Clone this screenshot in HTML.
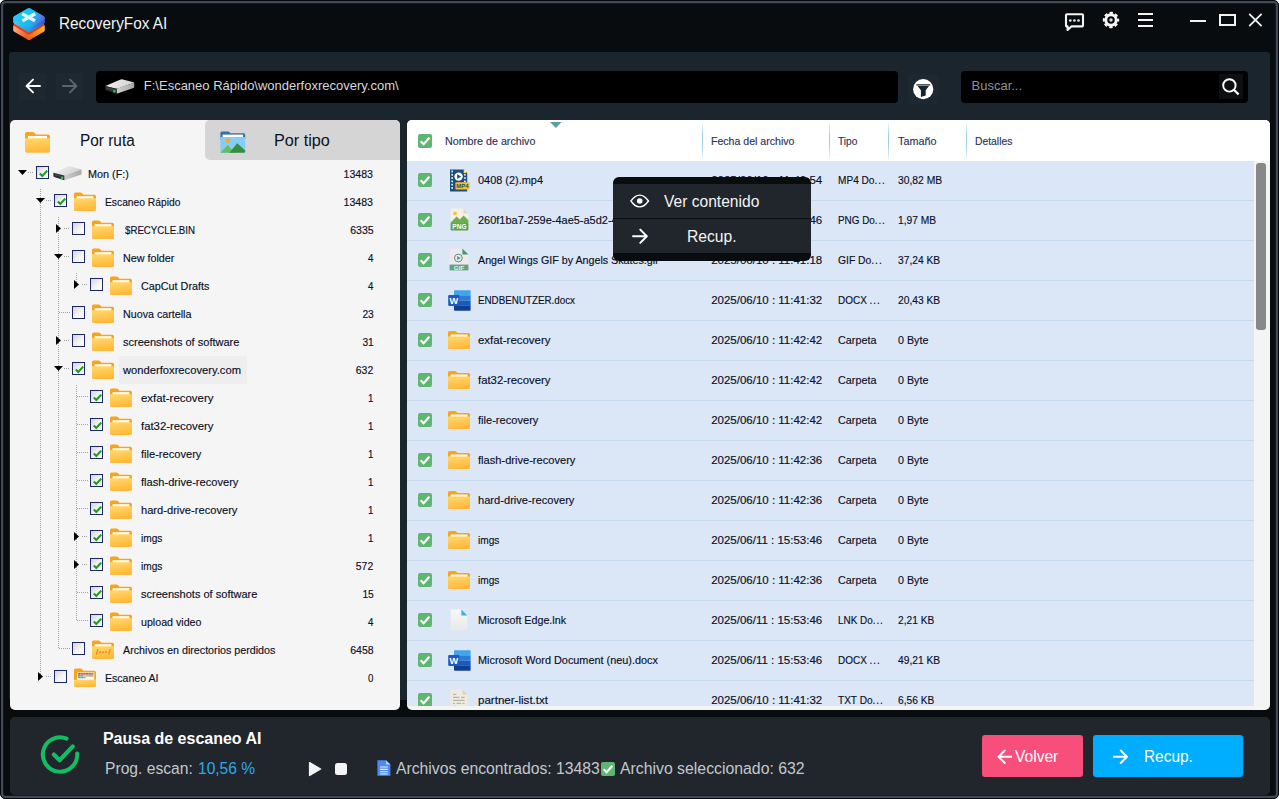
<!DOCTYPE html>
<html><head><meta charset="utf-8"><title>RecoveryFox AI</title>
<style>
html,body{margin:0;padding:0}
body{width:1279px;height:799px;overflow:hidden;position:relative;background:#fff;font-family:"Liberation Sans", sans-serif;}
div,svg{box-sizing:border-box}
.abs{position:absolute}
</style></head><body>
<div class="abs" style="left:0;top:0;width:1279px;height:799px;background:#090c0f;border:1px solid #05070a;border-radius:5px;box-shadow:inset 0 0 0 2.2px #414a5d;overflow:hidden"></div>

<div class="abs" style="left:9px;top:52px;width:1261px;height:648px;background:#1b252d;border-radius:3px"></div>
<svg class="abs" style="left:12px;top:7px" width="34" height="34" viewBox="0 0 34 34"><defs>
<linearGradient id="lt" x1="0" y1="0.3" x2="1" y2="0.6"><stop offset="0" stop-color="#27c9f6"/><stop offset="0.55" stop-color="#19bdf3"/><stop offset="0.85" stop-color="#3c8fe9"/><stop offset="1" stop-color="#6a63d8"/></linearGradient>
<linearGradient id="ls" x1="0" y1="0" x2="1" y2="0"><stop offset="0" stop-color="#4fc3ee"/><stop offset="0.5" stop-color="#18a3e2"/><stop offset="1" stop-color="#2f62d6"/></linearGradient>
<linearGradient id="lo1" x1="0" y1="0" x2="1" y2="0.5"><stop offset="0" stop-color="#ffab86"/><stop offset="1" stop-color="#f25a1c"/></linearGradient>
<linearGradient id="lo2" x1="0" y1="1" x2="1" y2="0"><stop offset="0" stop-color="#f0601a"/><stop offset="1" stop-color="#f8c02a"/></linearGradient></defs>
<g stroke-linejoin="round" stroke-width="4">
<path d="M3.2 19.4L17 27.4V31L3.2 23Z" fill="url(#lo1)" stroke="url(#lo1)"/>
<path d="M17 27.4L30.8 19.4V23L17 31Z" fill="url(#lo2)" stroke="url(#lo2)"/>
<path d="M3 17.4L17 25.6L31 17.4V18L17 26.4L3 18Z" fill="#e53b19" stroke="#e53b19" stroke-width="2.6"/>
<path d="M3.2 11.6L17 19.6L30.8 11.6V15L17 23.2L3.2 15Z" fill="url(#ls)" stroke="url(#ls)"/>
<path d="M17 3.2L30.6 10.8L17 19L3.4 10.8Z" fill="url(#lt)" stroke="url(#lt)" stroke-width="4.4"/>
</g>
<path d="M10.2 6.9L23 13.7M23.2 6.7L10.4 13.9" stroke="#e2f4fb" stroke-width="3.3"/></svg>
<div style="position:absolute;left:59.40px;top:13.56px;height:20px;line-height:20px;font-size:16px;color:#f2f4f6;font-weight:normal;white-space:nowrap;transform:scaleX(0.9590);transform-origin:0 50%;">RecoveryFox AI</div>
<svg class="abs" style="left:1063px;top:11px" width="24" height="22" viewBox="0 0 24 22"><path d="M4.8 3.3H19.2Q20 3.3 20 4.1V14.6Q20 15.4 19.2 15.4H8.4L4.6 19V15.4H3.8Q3 15.4 3 14.6V4.1Q3 3.3 3.8 3.3Z" fill="none" stroke="#f4f4f4" stroke-width="2.1" stroke-linejoin="round"/><circle cx="7.3" cy="9.5" r="1.35" fill="#e6e6e6"/><circle cx="11.4" cy="9.5" r="1.35" fill="#e6e6e6"/><circle cx="15.5" cy="9.5" r="1.35" fill="#e6e6e6"/></svg>
<svg class="abs" style="left:1102px;top:11px" width="18" height="18" viewBox="0 0 18 18"><circle cx="9" cy="9" r="5.2" fill="none" stroke="#f4f4f4" stroke-width="2.9"/><circle cx="9" cy="9" r="7.1" fill="none" stroke="#f4f4f4" stroke-width="2.2" stroke-dasharray="3.3 2.276" stroke-dashoffset="1.65"/><circle cx="9" cy="9" r="1.7" fill="#d8d8d8"/></svg>
<svg class="abs" style="left:1138px;top:12px" width="16" height="16" viewBox="0 0 16 16"><path d="M0 2H15M0 8H15M0 14H15" stroke="#f4f4f4" stroke-width="2"/></svg>
<div class="abs" style="left:1190px;top:20px;width:16px;height:2px;background:#f2f2f2"></div>
<div class="abs" style="left:1219px;top:14px;width:17px;height:12px;border:2px solid #f2f2f2"></div>
<svg class="abs" style="left:1248px;top:13px" width="15" height="14" viewBox="0 0 15 14"><path d="M1.2 0.8L13.6 13.2M13.6 0.8L1.2 13.2" stroke="#f2f2f2" stroke-width="1.8"/></svg>
<div class="abs" style="left:19px;top:73px;width:27px;height:27px;background:#1d2830"></div>
<div class="abs" style="left:56px;top:73px;width:27px;height:27px;background:#1e2830"></div>
<svg style="position:absolute;left:24.5px;top:78px" width="16" height="16" viewBox="0 0 16 16"><path d="M15 8H2M8 1.6L1.6 8L8 14.4" fill="none" stroke="#ffffff" stroke-width="1.9" stroke-linecap="round" stroke-linejoin="round"/></svg>
<svg style="position:absolute;left:61.5px;top:78px" width="16" height="16" viewBox="0 0 16 16"><path d="M1 8H14M8 1.6L14.4 8L8 14.4" fill="none" stroke="#5c666e" stroke-width="1.9" stroke-linecap="round" stroke-linejoin="round"/></svg>
<div class="abs" style="left:96px;top:71px;width:802px;height:31.5px;background:#000;border-radius:4px"></div>
<svg style="position:absolute;left:105px;top:79px" width="30" height="15" viewBox="0 0 30 15"><defs><linearGradient id="dg" x1="0" y1="0" x2="1" y2="0.3"><stop offset="0" stop-color="#f4f4f4"/><stop offset="1" stop-color="#d2d2d2"/></linearGradient><linearGradient id="dr" x1="0" y1="0" x2="1" y2="0"><stop offset="0" stop-color="#cfcfcf"/><stop offset="1" stop-color="#a8a8a8"/></linearGradient></defs><path d="M0.4 6.9L15.6 0.5Q16.6 0.1 17.8 0.4L28.6 3.3Q29.4 3.6 28.6 4L12.4 9.7Q11.6 9.9 10.8 9.7Z" fill="url(#dg)"/><path d="M11.6 9.8L29.2 3.7V8.2Q29.2 8.8 28.4 9.1L11.6 14.7Z" fill="url(#dr)"/><path d="M0.3 6.9L11.6 9.8V14.7L1 11.2Q0.3 10.9 0.3 10.2Z" fill="#2c2f33"/><path d="M1.6 8.4L10.4 10.8V11.8L1.6 9.4Z" fill="#4a4d52"/><rect x="8.2" y="11.1" width="2.3" height="2.3" fill="#2bd14a"/></svg>
<div style="position:absolute;left:143.80px;top:75.60px;height:20px;line-height:20px;font-size:13px;color:#d4d8dc;font-weight:normal;white-space:nowrap;">F:\Escaneo Rápido\wonderfoxrecovery.com\</div>
<div class="abs" style="left:908px;top:74px;width:30px;height:30px;background:#1d2830;border-radius:2px"></div>
<svg class="abs" style="left:912.8px;top:78.8px" width="21" height="21" viewBox="0 0 21 21"><circle cx="10.2" cy="10.2" r="10.1" fill="#fff"/><path d="M3.4 5.2H17.2V6.5H3.4Z M4.6 6.9H16L12.7 11.2V16.6L7.9 18V11.2Z" fill="#18232b"/></svg>
<div class="abs" style="left:961px;top:71px;width:287px;height:31.5px;background:#000;border-radius:4px"></div>
<div class="abs" style="left:1218.5px;top:74px;width:24.5px;height:24.5px;background:#0b0f12"></div>
<div style="position:absolute;left:971.50px;top:75.60px;height:20px;line-height:20px;font-size:13px;color:#8b9298;font-weight:normal;white-space:nowrap;">Buscar...</div>
<svg class="abs" style="left:1221px;top:77px" width="20" height="20" viewBox="0 0 20 20"><circle cx="8.4" cy="8.4" r="6.2" fill="none" stroke="#fff" stroke-width="1.9"/><path d="M12.8 12.8L17.6 17.4" stroke="#fff" stroke-width="2.2"/></svg>
<div class="abs" style="left:10px;top:120px;width:390.3px;height:590px;background:#f5f5f5;border-radius:5px"></div>
<div class="abs" style="left:205px;top:120px;width:195.3px;height:40px;background:#d5d5d5;border-radius:5px 5px 0 5px"></div>
<svg style="position:absolute;left:25px;top:131px" width="25" height="22" viewBox="0 0 22 19"><defs><linearGradient id="fg" x1="0" y1="0" x2="0.25" y2="1"><stop offset="0" stop-color="#ffd96f"/><stop offset="1" stop-color="#ffb83a"/></linearGradient></defs><path d="M0 2.2Q0 0.6 1.6 0.6H6.6Q7.6 0.6 8.3 1.4L9.6 2.8H20.4Q22 2.8 22 4.4V12H0Z" fill="#f8a31d"/><rect x="2.6" y="4.2" width="16.8" height="3" fill="#fffdf5"/><path d="M0 6.2H22V17.4Q22 19 20.4 19H1.6Q0 19 0 17.4Z" fill="url(#fg)"/></svg>
<div style="position:absolute;left:79.60px;top:130.56px;height:20px;line-height:20px;font-size:16px;color:#0c1024;font-weight:normal;white-space:nowrap;transform:scaleX(0.9611);transform-origin:0 50%;">Por ruta</div>
<svg class="abs" style="left:220px;top:131px" width="26" height="22" viewBox="0 0 26 22"><path d="M0.4 2Q0.4 0.4 2 0.4H8Q9 0.4 9.6 1.2L10.4 2.2H23.6Q25.2 2.2 25.2 3.8V8H0.4Z" fill="#3a6ea5"/><rect x="2.6" y="3.6" width="20.4" height="2.4" fill="#fff"/><path d="M0.4 6H25.2V20.2Q25.2 21.8 23.6 21.8H2Q0.4 21.8 0.4 20.2Z" fill="#85cdf6"/><circle cx="7.8" cy="9.6" r="2.3" fill="#f9a825"/><path d="M0.4 21.8L7.6 14L13.6 20.4L15 21.8Z" fill="#66bb6a"/><path d="M9.4 21.8L17.2 12.2L25.2 19.6V20.2Q25.2 21.8 23.6 21.8Z" fill="#388e3c"/></svg>
<div style="position:absolute;left:274.30px;top:130.56px;height:20px;line-height:20px;font-size:16px;color:#0c1024;font-weight:normal;white-space:nowrap;transform:scaleX(1.0119);transform-origin:0 50%;">Por tipo</div>
<div class="abs" style="left:119px;top:356px;width:128px;height:28px;background:#eeeeee;border-radius:2px"></div>
<div class="abs" style="left:40px;top:189px;width:1px;height:487px;background:repeating-linear-gradient(to bottom,#a2a2a2 0 1px,transparent 1px 2px)"></div>
<div class="abs" style="left:58px;top:217px;width:1px;height:432px;background:repeating-linear-gradient(to bottom,#a2a2a2 0 1px,transparent 1px 2px)"></div>
<div class="abs" style="left:76px;top:273px;width:1px;height:11px;background:repeating-linear-gradient(to bottom,#a2a2a2 0 1px,transparent 1px 2px)"></div>
<div class="abs" style="left:76px;top:385px;width:1px;height:236px;background:repeating-linear-gradient(to bottom,#a2a2a2 0 1px,transparent 1px 2px)"></div>
<div class="abs" style="left:28px;top:172px;width:5px;height:1px;background:repeating-linear-gradient(to right,#a2a2a2 0 1px,transparent 1px 2px)"></div>
<svg style="position:absolute;left:18px;top:170.0px" width="9" height="5" viewBox="0 0 9 5"><path d="M0 0H9L4.5 5Z" fill="#000"/></svg>
<div style="position:absolute;left:36px;top:166.0px;width:13px;height:13px;box-sizing:border-box;border:1px solid #1d2766;background:linear-gradient(135deg,#d4d4d4 0%,#f4f4f4 55%,#ffffff 100%)"><svg style="position:absolute;left:1px;top:1px" width="11" height="11" viewBox="0 0 11 11"><path d="M1.8 5.4L4.3 8L9.2 2.6" fill="none" stroke="#1e9a22" stroke-width="2.1"/></svg></div>
<svg style="position:absolute;left:52.6px;top:166.3px" width="29.4" height="14.6" viewBox="0 0 30 15"><defs><linearGradient id="dg" x1="0" y1="0" x2="1" y2="0.3"><stop offset="0" stop-color="#f4f4f4"/><stop offset="1" stop-color="#d2d2d2"/></linearGradient><linearGradient id="dr" x1="0" y1="0" x2="1" y2="0"><stop offset="0" stop-color="#cfcfcf"/><stop offset="1" stop-color="#a8a8a8"/></linearGradient></defs><path d="M0.4 6.9L15.6 0.5Q16.6 0.1 17.8 0.4L28.6 3.3Q29.4 3.6 28.6 4L12.4 9.7Q11.6 9.9 10.8 9.7Z" fill="url(#dg)"/><path d="M11.6 9.8L29.2 3.7V8.2Q29.2 8.8 28.4 9.1L11.6 14.7Z" fill="url(#dr)"/><path d="M0.3 6.9L11.6 9.8V14.7L1 11.2Q0.3 10.9 0.3 10.2Z" fill="#2c2f33"/><path d="M1.6 8.4L10.4 10.8V11.8L1.6 9.4Z" fill="#4a4d52"/><rect x="8.2" y="11.1" width="2.3" height="2.3" fill="#2bd14a"/></svg>
<div style="position:absolute;left:87.60px;top:164.02px;height:20px;line-height:20px;font-size:11.5px;color:#0a0e26;font-weight:normal;white-space:nowrap;transform:scaleX(0.9414);transform-origin:0 50%;-webkit-text-stroke:0.15px #0a0e26;">Mon (F:)</div>
<div style="position:absolute;right:905.70px;top:164.02px;height:20px;line-height:20px;font-size:11.5px;color:#0a0e26;font-weight:normal;white-space:nowrap;transform:scaleX(0.9193);transform-origin:100% 50%;-webkit-text-stroke:0.15px #0a0e26;">13483</div>
<div class="abs" style="left:46px;top:200px;width:6px;height:1px;background:repeating-linear-gradient(to right,#a2a2a2 0 1px,transparent 1px 2px)"></div>
<svg style="position:absolute;left:36px;top:198.0px" width="9" height="5" viewBox="0 0 9 5"><path d="M0 0H9L4.5 5Z" fill="#000"/></svg>
<div style="position:absolute;left:54px;top:194.0px;width:13px;height:13px;box-sizing:border-box;border:1px solid #1d2766;background:linear-gradient(135deg,#d4d4d4 0%,#f4f4f4 55%,#ffffff 100%)"><svg style="position:absolute;left:1px;top:1px" width="11" height="11" viewBox="0 0 11 11"><path d="M1.8 5.4L4.3 8L9.2 2.6" fill="none" stroke="#1e9a22" stroke-width="2.1"/></svg></div>
<svg style="position:absolute;left:74px;top:191.9px" width="22" height="19" viewBox="0 0 22 19"><defs><linearGradient id="fg" x1="0" y1="0" x2="0.25" y2="1"><stop offset="0" stop-color="#ffd96f"/><stop offset="1" stop-color="#ffb83a"/></linearGradient></defs><path d="M0 2.2Q0 0.6 1.6 0.6H6.6Q7.6 0.6 8.3 1.4L9.6 2.8H20.4Q22 2.8 22 4.4V12H0Z" fill="#f8a31d"/><rect x="2.6" y="4.2" width="16.8" height="3" fill="#fffdf5"/><path d="M0 6.2H22V17.4Q22 19 20.4 19H1.6Q0 19 0 17.4Z" fill="url(#fg)"/></svg>
<div style="position:absolute;left:105.30px;top:192.02px;height:20px;line-height:20px;font-size:11.5px;color:#0a0e26;font-weight:normal;white-space:nowrap;transform:scaleX(0.8934);transform-origin:0 50%;-webkit-text-stroke:0.15px #0a0e26;">Escaneo Rápido</div>
<div style="position:absolute;right:905.70px;top:192.02px;height:20px;line-height:20px;font-size:11.5px;color:#0a0e26;font-weight:normal;white-space:nowrap;transform:scaleX(0.9193);transform-origin:100% 50%;-webkit-text-stroke:0.15px #0a0e26;">13483</div>
<div class="abs" style="left:64px;top:228px;width:6px;height:1px;background:repeating-linear-gradient(to right,#a2a2a2 0 1px,transparent 1px 2px)"></div>
<svg style="position:absolute;left:56px;top:224.0px" width="5" height="9" viewBox="0 0 5 9"><path d="M0 0L5 4.5L0 9Z" fill="#000"/></svg>
<div style="position:absolute;left:72px;top:222.0px;width:13px;height:13px;box-sizing:border-box;border:1px solid #1d2766;background:linear-gradient(135deg,#d4d4d4 0%,#f4f4f4 55%,#ffffff 100%)"></div>
<svg style="position:absolute;left:92px;top:219.9px" width="22" height="19" viewBox="0 0 22 19"><defs><linearGradient id="fg" x1="0" y1="0" x2="0.25" y2="1"><stop offset="0" stop-color="#ffd96f"/><stop offset="1" stop-color="#ffb83a"/></linearGradient></defs><path d="M0 2.2Q0 0.6 1.6 0.6H6.6Q7.6 0.6 8.3 1.4L9.6 2.8H20.4Q22 2.8 22 4.4V12H0Z" fill="#f8a31d"/><rect x="2.6" y="4.2" width="16.8" height="3" fill="#fffdf5"/><path d="M0 6.2H22V17.4Q22 19 20.4 19H1.6Q0 19 0 17.4Z" fill="url(#fg)"/></svg>
<div style="position:absolute;left:124.60px;top:220.02px;height:20px;line-height:20px;font-size:11.5px;color:#0a0e26;font-weight:normal;white-space:nowrap;transform:scaleX(0.8425);transform-origin:0 50%;-webkit-text-stroke:0.15px #0a0e26;">$RECYCLE.BIN</div>
<div style="position:absolute;right:905.70px;top:220.02px;height:20px;line-height:20px;font-size:11.5px;color:#0a0e26;font-weight:normal;white-space:nowrap;transform:scaleX(0.9146);transform-origin:100% 50%;-webkit-text-stroke:0.15px #0a0e26;">6335</div>
<div class="abs" style="left:64px;top:256px;width:6px;height:1px;background:repeating-linear-gradient(to right,#a2a2a2 0 1px,transparent 1px 2px)"></div>
<svg style="position:absolute;left:54px;top:254.0px" width="9" height="5" viewBox="0 0 9 5"><path d="M0 0H9L4.5 5Z" fill="#000"/></svg>
<div style="position:absolute;left:72px;top:250.0px;width:13px;height:13px;box-sizing:border-box;border:1px solid #1d2766;background:linear-gradient(135deg,#d4d4d4 0%,#f4f4f4 55%,#ffffff 100%)"></div>
<svg style="position:absolute;left:92px;top:247.9px" width="22" height="19" viewBox="0 0 22 19"><defs><linearGradient id="fg" x1="0" y1="0" x2="0.25" y2="1"><stop offset="0" stop-color="#ffd96f"/><stop offset="1" stop-color="#ffb83a"/></linearGradient></defs><path d="M0 2.2Q0 0.6 1.6 0.6H6.6Q7.6 0.6 8.3 1.4L9.6 2.8H20.4Q22 2.8 22 4.4V12H0Z" fill="#f8a31d"/><rect x="2.6" y="4.2" width="16.8" height="3" fill="#fffdf5"/><path d="M0 6.2H22V17.4Q22 19 20.4 19H1.6Q0 19 0 17.4Z" fill="url(#fg)"/></svg>
<div style="position:absolute;left:123.30px;top:248.02px;height:20px;line-height:20px;font-size:11.5px;color:#0a0e26;font-weight:normal;white-space:nowrap;transform:scaleX(0.9351);transform-origin:0 50%;-webkit-text-stroke:0.15px #0a0e26;">New folder</div>
<div style="position:absolute;right:905.70px;top:248.02px;height:20px;line-height:20px;font-size:11.5px;color:#0a0e26;font-weight:normal;white-space:nowrap;transform:scaleX(0.8443);transform-origin:100% 50%;-webkit-text-stroke:0.15px #0a0e26;">4</div>
<div class="abs" style="left:82px;top:284px;width:6px;height:1px;background:repeating-linear-gradient(to right,#a2a2a2 0 1px,transparent 1px 2px)"></div>
<svg style="position:absolute;left:74px;top:280.0px" width="5" height="9" viewBox="0 0 5 9"><path d="M0 0L5 4.5L0 9Z" fill="#000"/></svg>
<div style="position:absolute;left:90px;top:278.0px;width:13px;height:13px;box-sizing:border-box;border:1px solid #1d2766;background:linear-gradient(135deg,#d4d4d4 0%,#f4f4f4 55%,#ffffff 100%)"></div>
<svg style="position:absolute;left:110px;top:275.9px" width="22" height="19" viewBox="0 0 22 19"><defs><linearGradient id="fg" x1="0" y1="0" x2="0.25" y2="1"><stop offset="0" stop-color="#ffd96f"/><stop offset="1" stop-color="#ffb83a"/></linearGradient></defs><path d="M0 2.2Q0 0.6 1.6 0.6H6.6Q7.6 0.6 8.3 1.4L9.6 2.8H20.4Q22 2.8 22 4.4V12H0Z" fill="#f8a31d"/><rect x="2.6" y="4.2" width="16.8" height="3" fill="#fffdf5"/><path d="M0 6.2H22V17.4Q22 19 20.4 19H1.6Q0 19 0 17.4Z" fill="url(#fg)"/></svg>
<div style="position:absolute;left:141.30px;top:276.02px;height:20px;line-height:20px;font-size:11.5px;color:#0a0e26;font-weight:normal;white-space:nowrap;transform:scaleX(0.9388);transform-origin:0 50%;-webkit-text-stroke:0.15px #0a0e26;">CapCut Drafts</div>
<div style="position:absolute;right:905.70px;top:276.02px;height:20px;line-height:20px;font-size:11.5px;color:#0a0e26;font-weight:normal;white-space:nowrap;transform:scaleX(0.8443);transform-origin:100% 50%;-webkit-text-stroke:0.15px #0a0e26;">4</div>
<div class="abs" style="left:59px;top:312px;width:11px;height:1px;background:repeating-linear-gradient(to right,#a2a2a2 0 1px,transparent 1px 2px)"></div>
<div style="position:absolute;left:72px;top:306.0px;width:13px;height:13px;box-sizing:border-box;border:1px solid #1d2766;background:linear-gradient(135deg,#d4d4d4 0%,#f4f4f4 55%,#ffffff 100%)"></div>
<svg style="position:absolute;left:92px;top:303.9px" width="22" height="19" viewBox="0 0 22 19"><defs><linearGradient id="fg" x1="0" y1="0" x2="0.25" y2="1"><stop offset="0" stop-color="#ffd96f"/><stop offset="1" stop-color="#ffb83a"/></linearGradient></defs><path d="M0 2.2Q0 0.6 1.6 0.6H6.6Q7.6 0.6 8.3 1.4L9.6 2.8H20.4Q22 2.8 22 4.4V12H0Z" fill="#f8a31d"/><rect x="2.6" y="4.2" width="16.8" height="3" fill="#fffdf5"/><path d="M0 6.2H22V17.4Q22 19 20.4 19H1.6Q0 19 0 17.4Z" fill="url(#fg)"/></svg>
<div style="position:absolute;left:123.30px;top:304.02px;height:20px;line-height:20px;font-size:11.5px;color:#0a0e26;font-weight:normal;white-space:nowrap;transform:scaleX(0.9305);transform-origin:0 50%;-webkit-text-stroke:0.15px #0a0e26;">Nuova cartella</div>
<div style="position:absolute;right:905.70px;top:304.02px;height:20px;line-height:20px;font-size:11.5px;color:#0a0e26;font-weight:normal;white-space:nowrap;transform:scaleX(0.8912);transform-origin:100% 50%;-webkit-text-stroke:0.15px #0a0e26;">23</div>
<div class="abs" style="left:64px;top:340px;width:6px;height:1px;background:repeating-linear-gradient(to right,#a2a2a2 0 1px,transparent 1px 2px)"></div>
<svg style="position:absolute;left:56px;top:336.0px" width="5" height="9" viewBox="0 0 5 9"><path d="M0 0L5 4.5L0 9Z" fill="#000"/></svg>
<div style="position:absolute;left:72px;top:334.0px;width:13px;height:13px;box-sizing:border-box;border:1px solid #1d2766;background:linear-gradient(135deg,#d4d4d4 0%,#f4f4f4 55%,#ffffff 100%)"></div>
<svg style="position:absolute;left:92px;top:331.9px" width="22" height="19" viewBox="0 0 22 19"><defs><linearGradient id="fg" x1="0" y1="0" x2="0.25" y2="1"><stop offset="0" stop-color="#ffd96f"/><stop offset="1" stop-color="#ffb83a"/></linearGradient></defs><path d="M0 2.2Q0 0.6 1.6 0.6H6.6Q7.6 0.6 8.3 1.4L9.6 2.8H20.4Q22 2.8 22 4.4V12H0Z" fill="#f8a31d"/><rect x="2.6" y="4.2" width="16.8" height="3" fill="#fffdf5"/><path d="M0 6.2H22V17.4Q22 19 20.4 19H1.6Q0 19 0 17.4Z" fill="url(#fg)"/></svg>
<div style="position:absolute;left:123.30px;top:332.02px;height:20px;line-height:20px;font-size:11.5px;color:#0a0e26;font-weight:normal;white-space:nowrap;transform:scaleX(0.9584);transform-origin:0 50%;-webkit-text-stroke:0.15px #0a0e26;">screenshots of software</div>
<div style="position:absolute;right:905.70px;top:332.02px;height:20px;line-height:20px;font-size:11.5px;color:#0a0e26;font-weight:normal;white-space:nowrap;transform:scaleX(0.8912);transform-origin:100% 50%;-webkit-text-stroke:0.15px #0a0e26;">31</div>
<div class="abs" style="left:64px;top:368px;width:6px;height:1px;background:repeating-linear-gradient(to right,#a2a2a2 0 1px,transparent 1px 2px)"></div>
<svg style="position:absolute;left:54px;top:366.0px" width="9" height="5" viewBox="0 0 9 5"><path d="M0 0H9L4.5 5Z" fill="#000"/></svg>
<div style="position:absolute;left:72px;top:362.0px;width:13px;height:13px;box-sizing:border-box;border:1px solid #1d2766;background:linear-gradient(135deg,#d4d4d4 0%,#f4f4f4 55%,#ffffff 100%)"><svg style="position:absolute;left:1px;top:1px" width="11" height="11" viewBox="0 0 11 11"><path d="M1.8 5.4L4.3 8L9.2 2.6" fill="none" stroke="#1e9a22" stroke-width="2.1"/></svg></div>
<svg style="position:absolute;left:92px;top:359.9px" width="22" height="19" viewBox="0 0 22 19"><defs><linearGradient id="fg" x1="0" y1="0" x2="0.25" y2="1"><stop offset="0" stop-color="#ffd96f"/><stop offset="1" stop-color="#ffb83a"/></linearGradient></defs><path d="M0 2.2Q0 0.6 1.6 0.6H6.6Q7.6 0.6 8.3 1.4L9.6 2.8H20.4Q22 2.8 22 4.4V12H0Z" fill="#f8a31d"/><rect x="2.6" y="4.2" width="16.8" height="3" fill="#fffdf5"/><path d="M0 6.2H22V17.4Q22 19 20.4 19H1.6Q0 19 0 17.4Z" fill="url(#fg)"/></svg>
<div style="position:absolute;left:123.30px;top:360.02px;height:20px;line-height:20px;font-size:11.5px;color:#0a0e26;font-weight:normal;white-space:nowrap;transform:scaleX(0.9734);transform-origin:0 50%;-webkit-text-stroke:0.15px #0a0e26;">wonderfoxrecovery.com</div>
<div style="position:absolute;right:905.70px;top:360.02px;height:20px;line-height:20px;font-size:11.5px;color:#0a0e26;font-weight:normal;white-space:nowrap;transform:scaleX(0.9068);transform-origin:100% 50%;-webkit-text-stroke:0.15px #0a0e26;">632</div>
<div class="abs" style="left:77px;top:396px;width:11px;height:1px;background:repeating-linear-gradient(to right,#a2a2a2 0 1px,transparent 1px 2px)"></div>
<div style="position:absolute;left:90px;top:390.0px;width:13px;height:13px;box-sizing:border-box;border:1px solid #1d2766;background:linear-gradient(135deg,#d4d4d4 0%,#f4f4f4 55%,#ffffff 100%)"><svg style="position:absolute;left:1px;top:1px" width="11" height="11" viewBox="0 0 11 11"><path d="M1.8 5.4L4.3 8L9.2 2.6" fill="none" stroke="#1e9a22" stroke-width="2.1"/></svg></div>
<svg style="position:absolute;left:110px;top:387.9px" width="22" height="19" viewBox="0 0 22 19"><defs><linearGradient id="fg" x1="0" y1="0" x2="0.25" y2="1"><stop offset="0" stop-color="#ffd96f"/><stop offset="1" stop-color="#ffb83a"/></linearGradient></defs><path d="M0 2.2Q0 0.6 1.6 0.6H6.6Q7.6 0.6 8.3 1.4L9.6 2.8H20.4Q22 2.8 22 4.4V12H0Z" fill="#f8a31d"/><rect x="2.6" y="4.2" width="16.8" height="3" fill="#fffdf5"/><path d="M0 6.2H22V17.4Q22 19 20.4 19H1.6Q0 19 0 17.4Z" fill="url(#fg)"/></svg>
<div style="position:absolute;left:141.30px;top:388.02px;height:20px;line-height:20px;font-size:11.5px;color:#0a0e26;font-weight:normal;white-space:nowrap;transform:scaleX(0.9937);transform-origin:0 50%;-webkit-text-stroke:0.15px #0a0e26;">exfat-recovery</div>
<div style="position:absolute;right:905.70px;top:388.02px;height:20px;line-height:20px;font-size:11.5px;color:#0a0e26;font-weight:normal;white-space:nowrap;transform:scaleX(0.8443);transform-origin:100% 50%;-webkit-text-stroke:0.15px #0a0e26;">1</div>
<div class="abs" style="left:77px;top:424px;width:11px;height:1px;background:repeating-linear-gradient(to right,#a2a2a2 0 1px,transparent 1px 2px)"></div>
<div style="position:absolute;left:90px;top:418.0px;width:13px;height:13px;box-sizing:border-box;border:1px solid #1d2766;background:linear-gradient(135deg,#d4d4d4 0%,#f4f4f4 55%,#ffffff 100%)"><svg style="position:absolute;left:1px;top:1px" width="11" height="11" viewBox="0 0 11 11"><path d="M1.8 5.4L4.3 8L9.2 2.6" fill="none" stroke="#1e9a22" stroke-width="2.1"/></svg></div>
<svg style="position:absolute;left:110px;top:415.9px" width="22" height="19" viewBox="0 0 22 19"><defs><linearGradient id="fg" x1="0" y1="0" x2="0.25" y2="1"><stop offset="0" stop-color="#ffd96f"/><stop offset="1" stop-color="#ffb83a"/></linearGradient></defs><path d="M0 2.2Q0 0.6 1.6 0.6H6.6Q7.6 0.6 8.3 1.4L9.6 2.8H20.4Q22 2.8 22 4.4V12H0Z" fill="#f8a31d"/><rect x="2.6" y="4.2" width="16.8" height="3" fill="#fffdf5"/><path d="M0 6.2H22V17.4Q22 19 20.4 19H1.6Q0 19 0 17.4Z" fill="url(#fg)"/></svg>
<div style="position:absolute;left:141.30px;top:416.02px;height:20px;line-height:20px;font-size:11.5px;color:#0a0e26;font-weight:normal;white-space:nowrap;transform:scaleX(0.9850);transform-origin:0 50%;-webkit-text-stroke:0.15px #0a0e26;">fat32-recovery</div>
<div style="position:absolute;right:905.70px;top:416.02px;height:20px;line-height:20px;font-size:11.5px;color:#0a0e26;font-weight:normal;white-space:nowrap;transform:scaleX(0.8443);transform-origin:100% 50%;-webkit-text-stroke:0.15px #0a0e26;">1</div>
<div class="abs" style="left:77px;top:452px;width:11px;height:1px;background:repeating-linear-gradient(to right,#a2a2a2 0 1px,transparent 1px 2px)"></div>
<div style="position:absolute;left:90px;top:446.0px;width:13px;height:13px;box-sizing:border-box;border:1px solid #1d2766;background:linear-gradient(135deg,#d4d4d4 0%,#f4f4f4 55%,#ffffff 100%)"><svg style="position:absolute;left:1px;top:1px" width="11" height="11" viewBox="0 0 11 11"><path d="M1.8 5.4L4.3 8L9.2 2.6" fill="none" stroke="#1e9a22" stroke-width="2.1"/></svg></div>
<svg style="position:absolute;left:110px;top:443.9px" width="22" height="19" viewBox="0 0 22 19"><defs><linearGradient id="fg" x1="0" y1="0" x2="0.25" y2="1"><stop offset="0" stop-color="#ffd96f"/><stop offset="1" stop-color="#ffb83a"/></linearGradient></defs><path d="M0 2.2Q0 0.6 1.6 0.6H6.6Q7.6 0.6 8.3 1.4L9.6 2.8H20.4Q22 2.8 22 4.4V12H0Z" fill="#f8a31d"/><rect x="2.6" y="4.2" width="16.8" height="3" fill="#fffdf5"/><path d="M0 6.2H22V17.4Q22 19 20.4 19H1.6Q0 19 0 17.4Z" fill="url(#fg)"/></svg>
<div style="position:absolute;left:141.30px;top:444.02px;height:20px;line-height:20px;font-size:11.5px;color:#0a0e26;font-weight:normal;white-space:nowrap;transform:scaleX(0.9644);transform-origin:0 50%;-webkit-text-stroke:0.15px #0a0e26;">file-recovery</div>
<div style="position:absolute;right:905.70px;top:444.02px;height:20px;line-height:20px;font-size:11.5px;color:#0a0e26;font-weight:normal;white-space:nowrap;transform:scaleX(0.8443);transform-origin:100% 50%;-webkit-text-stroke:0.15px #0a0e26;">1</div>
<div class="abs" style="left:77px;top:480px;width:11px;height:1px;background:repeating-linear-gradient(to right,#a2a2a2 0 1px,transparent 1px 2px)"></div>
<div style="position:absolute;left:90px;top:474.0px;width:13px;height:13px;box-sizing:border-box;border:1px solid #1d2766;background:linear-gradient(135deg,#d4d4d4 0%,#f4f4f4 55%,#ffffff 100%)"><svg style="position:absolute;left:1px;top:1px" width="11" height="11" viewBox="0 0 11 11"><path d="M1.8 5.4L4.3 8L9.2 2.6" fill="none" stroke="#1e9a22" stroke-width="2.1"/></svg></div>
<svg style="position:absolute;left:110px;top:471.9px" width="22" height="19" viewBox="0 0 22 19"><defs><linearGradient id="fg" x1="0" y1="0" x2="0.25" y2="1"><stop offset="0" stop-color="#ffd96f"/><stop offset="1" stop-color="#ffb83a"/></linearGradient></defs><path d="M0 2.2Q0 0.6 1.6 0.6H6.6Q7.6 0.6 8.3 1.4L9.6 2.8H20.4Q22 2.8 22 4.4V12H0Z" fill="#f8a31d"/><rect x="2.6" y="4.2" width="16.8" height="3" fill="#fffdf5"/><path d="M0 6.2H22V17.4Q22 19 20.4 19H1.6Q0 19 0 17.4Z" fill="url(#fg)"/></svg>
<div style="position:absolute;left:141.30px;top:472.02px;height:20px;line-height:20px;font-size:11.5px;color:#0a0e26;font-weight:normal;white-space:nowrap;transform:scaleX(0.9646);transform-origin:0 50%;-webkit-text-stroke:0.15px #0a0e26;">flash-drive-recovery</div>
<div style="position:absolute;right:905.70px;top:472.02px;height:20px;line-height:20px;font-size:11.5px;color:#0a0e26;font-weight:normal;white-space:nowrap;transform:scaleX(0.8443);transform-origin:100% 50%;-webkit-text-stroke:0.15px #0a0e26;">1</div>
<div class="abs" style="left:77px;top:508px;width:11px;height:1px;background:repeating-linear-gradient(to right,#a2a2a2 0 1px,transparent 1px 2px)"></div>
<div style="position:absolute;left:90px;top:502.0px;width:13px;height:13px;box-sizing:border-box;border:1px solid #1d2766;background:linear-gradient(135deg,#d4d4d4 0%,#f4f4f4 55%,#ffffff 100%)"><svg style="position:absolute;left:1px;top:1px" width="11" height="11" viewBox="0 0 11 11"><path d="M1.8 5.4L4.3 8L9.2 2.6" fill="none" stroke="#1e9a22" stroke-width="2.1"/></svg></div>
<svg style="position:absolute;left:110px;top:499.9px" width="22" height="19" viewBox="0 0 22 19"><defs><linearGradient id="fg" x1="0" y1="0" x2="0.25" y2="1"><stop offset="0" stop-color="#ffd96f"/><stop offset="1" stop-color="#ffb83a"/></linearGradient></defs><path d="M0 2.2Q0 0.6 1.6 0.6H6.6Q7.6 0.6 8.3 1.4L9.6 2.8H20.4Q22 2.8 22 4.4V12H0Z" fill="#f8a31d"/><rect x="2.6" y="4.2" width="16.8" height="3" fill="#fffdf5"/><path d="M0 6.2H22V17.4Q22 19 20.4 19H1.6Q0 19 0 17.4Z" fill="url(#fg)"/></svg>
<div style="position:absolute;left:141.30px;top:500.02px;height:20px;line-height:20px;font-size:11.5px;color:#0a0e26;font-weight:normal;white-space:nowrap;transform:scaleX(0.9669);transform-origin:0 50%;-webkit-text-stroke:0.15px #0a0e26;">hard-drive-recovery</div>
<div style="position:absolute;right:905.70px;top:500.02px;height:20px;line-height:20px;font-size:11.5px;color:#0a0e26;font-weight:normal;white-space:nowrap;transform:scaleX(0.8443);transform-origin:100% 50%;-webkit-text-stroke:0.15px #0a0e26;">1</div>
<div class="abs" style="left:82px;top:536px;width:6px;height:1px;background:repeating-linear-gradient(to right,#a2a2a2 0 1px,transparent 1px 2px)"></div>
<svg style="position:absolute;left:74px;top:532.0px" width="5" height="9" viewBox="0 0 5 9"><path d="M0 0L5 4.5L0 9Z" fill="#000"/></svg>
<div style="position:absolute;left:90px;top:530.0px;width:13px;height:13px;box-sizing:border-box;border:1px solid #1d2766;background:linear-gradient(135deg,#d4d4d4 0%,#f4f4f4 55%,#ffffff 100%)"><svg style="position:absolute;left:1px;top:1px" width="11" height="11" viewBox="0 0 11 11"><path d="M1.8 5.4L4.3 8L9.2 2.6" fill="none" stroke="#1e9a22" stroke-width="2.1"/></svg></div>
<svg style="position:absolute;left:110px;top:527.9px" width="22" height="19" viewBox="0 0 22 19"><defs><linearGradient id="fg" x1="0" y1="0" x2="0.25" y2="1"><stop offset="0" stop-color="#ffd96f"/><stop offset="1" stop-color="#ffb83a"/></linearGradient></defs><path d="M0 2.2Q0 0.6 1.6 0.6H6.6Q7.6 0.6 8.3 1.4L9.6 2.8H20.4Q22 2.8 22 4.4V12H0Z" fill="#f8a31d"/><rect x="2.6" y="4.2" width="16.8" height="3" fill="#fffdf5"/><path d="M0 6.2H22V17.4Q22 19 20.4 19H1.6Q0 19 0 17.4Z" fill="url(#fg)"/></svg>
<div style="position:absolute;left:141.30px;top:528.02px;height:20px;line-height:20px;font-size:11.5px;color:#0a0e26;font-weight:normal;white-space:nowrap;transform:scaleX(0.8813);transform-origin:0 50%;-webkit-text-stroke:0.15px #0a0e26;">imgs</div>
<div style="position:absolute;right:905.70px;top:528.02px;height:20px;line-height:20px;font-size:11.5px;color:#0a0e26;font-weight:normal;white-space:nowrap;transform:scaleX(0.8443);transform-origin:100% 50%;-webkit-text-stroke:0.15px #0a0e26;">1</div>
<div class="abs" style="left:82px;top:564px;width:6px;height:1px;background:repeating-linear-gradient(to right,#a2a2a2 0 1px,transparent 1px 2px)"></div>
<svg style="position:absolute;left:74px;top:560.0px" width="5" height="9" viewBox="0 0 5 9"><path d="M0 0L5 4.5L0 9Z" fill="#000"/></svg>
<div style="position:absolute;left:90px;top:558.0px;width:13px;height:13px;box-sizing:border-box;border:1px solid #1d2766;background:linear-gradient(135deg,#d4d4d4 0%,#f4f4f4 55%,#ffffff 100%)"><svg style="position:absolute;left:1px;top:1px" width="11" height="11" viewBox="0 0 11 11"><path d="M1.8 5.4L4.3 8L9.2 2.6" fill="none" stroke="#1e9a22" stroke-width="2.1"/></svg></div>
<svg style="position:absolute;left:110px;top:555.9px" width="22" height="19" viewBox="0 0 22 19"><defs><linearGradient id="fg" x1="0" y1="0" x2="0.25" y2="1"><stop offset="0" stop-color="#ffd96f"/><stop offset="1" stop-color="#ffb83a"/></linearGradient></defs><path d="M0 2.2Q0 0.6 1.6 0.6H6.6Q7.6 0.6 8.3 1.4L9.6 2.8H20.4Q22 2.8 22 4.4V12H0Z" fill="#f8a31d"/><rect x="2.6" y="4.2" width="16.8" height="3" fill="#fffdf5"/><path d="M0 6.2H22V17.4Q22 19 20.4 19H1.6Q0 19 0 17.4Z" fill="url(#fg)"/></svg>
<div style="position:absolute;left:141.30px;top:556.02px;height:20px;line-height:20px;font-size:11.5px;color:#0a0e26;font-weight:normal;white-space:nowrap;transform:scaleX(0.8813);transform-origin:0 50%;-webkit-text-stroke:0.15px #0a0e26;">imgs</div>
<div style="position:absolute;right:905.70px;top:556.02px;height:20px;line-height:20px;font-size:11.5px;color:#0a0e26;font-weight:normal;white-space:nowrap;transform:scaleX(0.9068);transform-origin:100% 50%;-webkit-text-stroke:0.15px #0a0e26;">572</div>
<div class="abs" style="left:77px;top:592px;width:11px;height:1px;background:repeating-linear-gradient(to right,#a2a2a2 0 1px,transparent 1px 2px)"></div>
<div style="position:absolute;left:90px;top:586.0px;width:13px;height:13px;box-sizing:border-box;border:1px solid #1d2766;background:linear-gradient(135deg,#d4d4d4 0%,#f4f4f4 55%,#ffffff 100%)"><svg style="position:absolute;left:1px;top:1px" width="11" height="11" viewBox="0 0 11 11"><path d="M1.8 5.4L4.3 8L9.2 2.6" fill="none" stroke="#1e9a22" stroke-width="2.1"/></svg></div>
<svg style="position:absolute;left:110px;top:583.9px" width="22" height="19" viewBox="0 0 22 19"><defs><linearGradient id="fg" x1="0" y1="0" x2="0.25" y2="1"><stop offset="0" stop-color="#ffd96f"/><stop offset="1" stop-color="#ffb83a"/></linearGradient></defs><path d="M0 2.2Q0 0.6 1.6 0.6H6.6Q7.6 0.6 8.3 1.4L9.6 2.8H20.4Q22 2.8 22 4.4V12H0Z" fill="#f8a31d"/><rect x="2.6" y="4.2" width="16.8" height="3" fill="#fffdf5"/><path d="M0 6.2H22V17.4Q22 19 20.4 19H1.6Q0 19 0 17.4Z" fill="url(#fg)"/></svg>
<div style="position:absolute;left:141.30px;top:584.02px;height:20px;line-height:20px;font-size:11.5px;color:#0a0e26;font-weight:normal;white-space:nowrap;transform:scaleX(0.9584);transform-origin:0 50%;-webkit-text-stroke:0.15px #0a0e26;">screenshots of software</div>
<div style="position:absolute;right:905.70px;top:584.02px;height:20px;line-height:20px;font-size:11.5px;color:#0a0e26;font-weight:normal;white-space:nowrap;transform:scaleX(0.8912);transform-origin:100% 50%;-webkit-text-stroke:0.15px #0a0e26;">15</div>
<div class="abs" style="left:77px;top:620px;width:11px;height:1px;background:repeating-linear-gradient(to right,#a2a2a2 0 1px,transparent 1px 2px)"></div>
<div style="position:absolute;left:90px;top:614.0px;width:13px;height:13px;box-sizing:border-box;border:1px solid #1d2766;background:linear-gradient(135deg,#d4d4d4 0%,#f4f4f4 55%,#ffffff 100%)"><svg style="position:absolute;left:1px;top:1px" width="11" height="11" viewBox="0 0 11 11"><path d="M1.8 5.4L4.3 8L9.2 2.6" fill="none" stroke="#1e9a22" stroke-width="2.1"/></svg></div>
<svg style="position:absolute;left:110px;top:611.9px" width="22" height="19" viewBox="0 0 22 19"><defs><linearGradient id="fg" x1="0" y1="0" x2="0.25" y2="1"><stop offset="0" stop-color="#ffd96f"/><stop offset="1" stop-color="#ffb83a"/></linearGradient></defs><path d="M0 2.2Q0 0.6 1.6 0.6H6.6Q7.6 0.6 8.3 1.4L9.6 2.8H20.4Q22 2.8 22 4.4V12H0Z" fill="#f8a31d"/><rect x="2.6" y="4.2" width="16.8" height="3" fill="#fffdf5"/><path d="M0 6.2H22V17.4Q22 19 20.4 19H1.6Q0 19 0 17.4Z" fill="url(#fg)"/></svg>
<div style="position:absolute;left:141.30px;top:612.02px;height:20px;line-height:20px;font-size:11.5px;color:#0a0e26;font-weight:normal;white-space:nowrap;transform:scaleX(0.9261);transform-origin:0 50%;-webkit-text-stroke:0.15px #0a0e26;">upload video</div>
<div style="position:absolute;right:905.70px;top:612.02px;height:20px;line-height:20px;font-size:11.5px;color:#0a0e26;font-weight:normal;white-space:nowrap;transform:scaleX(0.8443);transform-origin:100% 50%;-webkit-text-stroke:0.15px #0a0e26;">4</div>
<div class="abs" style="left:59px;top:648px;width:11px;height:1px;background:repeating-linear-gradient(to right,#a2a2a2 0 1px,transparent 1px 2px)"></div>
<div style="position:absolute;left:72px;top:642.0px;width:13px;height:13px;box-sizing:border-box;border:1px solid #1d2766;background:linear-gradient(135deg,#d4d4d4 0%,#f4f4f4 55%,#ffffff 100%)"></div>
<svg style="position:absolute;left:92px;top:639.9px" width="22" height="19" viewBox="0 0 22 19"><defs><linearGradient id="fg" x1="0" y1="0" x2="0.25" y2="1"><stop offset="0" stop-color="#ffd96f"/><stop offset="1" stop-color="#ffb83a"/></linearGradient></defs><path d="M0 2.2Q0 0.6 1.6 0.6H6.6Q7.6 0.6 8.3 1.4L9.6 2.8H20.4Q22 2.8 22 4.4V12H0Z" fill="#f8a31d"/><rect x="2.6" y="4.2" width="16.8" height="3" fill="#fffdf5"/><path d="M0 6.2H22V17.4Q22 19 20.4 19H1.6Q0 19 0 17.4Z" fill="url(#fg)"/><path d="M5.9 9.2L4.3 14.6M18.3 9.2L16.7 14.6" stroke="#f28c1c" stroke-width="1.3"/><rect x="7.3" y="11.3" width="1.7" height="1.7" fill="#f28c1c"/><rect x="10.2" y="11.3" width="1.7" height="1.7" fill="#f28c1c"/><rect x="13.1" y="11.3" width="1.7" height="1.7" fill="#f28c1c"/></svg>
<div style="position:absolute;left:123.30px;top:640.02px;height:20px;line-height:20px;font-size:11.5px;color:#0a0e26;font-weight:normal;white-space:nowrap;transform:scaleX(0.9313);transform-origin:0 50%;-webkit-text-stroke:0.15px #0a0e26;">Archivos en directorios perdidos</div>
<div style="position:absolute;right:905.70px;top:640.02px;height:20px;line-height:20px;font-size:11.5px;color:#0a0e26;font-weight:normal;white-space:nowrap;transform:scaleX(0.9146);transform-origin:100% 50%;-webkit-text-stroke:0.15px #0a0e26;">6458</div>
<div class="abs" style="left:46px;top:676px;width:6px;height:1px;background:repeating-linear-gradient(to right,#a2a2a2 0 1px,transparent 1px 2px)"></div>
<svg style="position:absolute;left:38px;top:672.0px" width="5" height="9" viewBox="0 0 5 9"><path d="M0 0L5 4.5L0 9Z" fill="#000"/></svg>
<div style="position:absolute;left:54px;top:670.0px;width:13px;height:13px;box-sizing:border-box;border:1px solid #1d2766;background:linear-gradient(135deg,#d4d4d4 0%,#f4f4f4 55%,#ffffff 100%)"></div>
<svg style="position:absolute;left:74px;top:667.9px" width="22" height="19" viewBox="0 0 22 19"><defs><linearGradient id="fg" x1="0" y1="0" x2="0.25" y2="1"><stop offset="0" stop-color="#ffd96f"/><stop offset="1" stop-color="#ffb83a"/></linearGradient></defs><path d="M0 2.2Q0 0.6 1.6 0.6H6.6Q7.6 0.6 8.3 1.4L9.6 2.8H20.4Q22 2.8 22 4.4V12H0Z" fill="#f8a31d"/><rect x="3" y="4.5" width="17.3" height="7.4" fill="#fffefa"/><rect x="3.9" y="5" width="2.6" height="1.8" fill="#ef4d4d"/><rect x="6.5" y="5" width="2.6" height="1.8" fill="#f0567a"/><rect x="9.1" y="5" width="2.6" height="1.8" fill="#b45ad6"/><rect x="11.7" y="5" width="2.6" height="1.8" fill="#8f62e0"/><rect x="14.3" y="5" width="2.6" height="1.8" fill="#6f7de6"/><rect x="16.9" y="5" width="2.6" height="1.8" fill="#5a9bea"/><rect x="3.9" y="6.8" width="2.6" height="1.8" fill="#5cc05c"/><rect x="6.5" y="6.8" width="2.6" height="1.8" fill="#7acb4a"/><rect x="9.1" y="6.8" width="2.6" height="1.8" fill="#e6d23a"/><rect x="11.7" y="6.8" width="2.6" height="1.8" fill="#f2c22e"/><rect x="14.3" y="6.8" width="2.6" height="1.8" fill="#f5a02a"/><rect x="16.9" y="6.8" width="2.6" height="1.8" fill="#f5a02a"/><rect x="3.9" y="8.6" width="2.6" height="1.7" fill="#4aa8f0"/><rect x="6.5" y="8.6" width="2.6" height="1.7" fill="#4aa8f0"/><rect x="9.1" y="8.6" width="2.6" height="1.7" fill="#6ab8f4"/><path d="M0 11.7H22V17.4Q22 19 20.4 19H1.6Q0 19 0 17.4Z" fill="url(#fg)"/></svg>
<div style="position:absolute;left:105.30px;top:668.02px;height:20px;line-height:20px;font-size:11.5px;color:#0a0e26;font-weight:normal;white-space:nowrap;transform:scaleX(0.9178);transform-origin:0 50%;-webkit-text-stroke:0.15px #0a0e26;">Escaneo AI</div>
<div style="position:absolute;right:905.70px;top:668.02px;height:20px;line-height:20px;font-size:11.5px;color:#0a0e26;font-weight:normal;white-space:nowrap;transform:scaleX(0.8443);transform-origin:100% 50%;-webkit-text-stroke:0.15px #0a0e26;">0</div>
<div class="abs" style="left:407.3px;top:120px;width:862.7px;height:590px;background:#f4f4f4;border-radius:5px;overflow:hidden"><div class="abs" style="left:0;top:0;width:863px;height:41px;background:#fff"></div></div>
<div style="position:absolute;left:418px;top:134px;width:14px;height:14px;border-radius:2px;background:#5db771"><svg style="position:absolute;left:0;top:0" width="14" height="14" viewBox="0 0 14 14"><path d="M2.6 7.2L5.6 10.2L11.4 3.8" fill="none" stroke="#fff" stroke-width="2.2"/></svg></div>
<svg class="abs" style="left:550px;top:122px" width="12" height="6" viewBox="0 0 12 6"><path d="M0 0H11.6L5.8 6Z" fill="#5f9ea3"/></svg>
<div style="position:absolute;left:445.10px;top:131.02px;height:20px;line-height:20px;font-size:11.5px;color:#2c3158;font-weight:normal;white-space:nowrap;transform:scaleX(0.9304);transform-origin:0 50%;-webkit-text-stroke:0.15px #2c3158;">Nombre de archivo</div>
<div style="position:absolute;left:711.20px;top:131.02px;height:20px;line-height:20px;font-size:11.5px;color:#2c3158;font-weight:normal;white-space:nowrap;transform:scaleX(0.9188);transform-origin:0 50%;-webkit-text-stroke:0.15px #2c3158;">Fecha del archivo</div>
<div style="position:absolute;left:838.20px;top:131.02px;height:20px;line-height:20px;font-size:11.5px;color:#2c3158;font-weight:normal;white-space:nowrap;transform:scaleX(0.8840);transform-origin:0 50%;-webkit-text-stroke:0.15px #2c3158;">Tipo</div>
<div style="position:absolute;left:897.80px;top:131.02px;height:20px;line-height:20px;font-size:11.5px;color:#2c3158;font-weight:normal;white-space:nowrap;transform:scaleX(0.9386);transform-origin:0 50%;-webkit-text-stroke:0.15px #2c3158;">Tamaño</div>
<div style="position:absolute;left:975.10px;top:131.02px;height:20px;line-height:20px;font-size:11.5px;color:#2c3158;font-weight:normal;white-space:nowrap;transform:scaleX(0.9002);transform-origin:0 50%;-webkit-text-stroke:0.15px #2c3158;">Detalles</div>
<div class="abs" style="left:702px;top:122px;width:1px;height:38px;background:linear-gradient(to bottom,rgba(150,205,232,0.1),#9fd0e8 35%,#9fd0e8 65%,rgba(150,205,232,0.1))"></div>
<div class="abs" style="left:829px;top:122px;width:1px;height:38px;background:linear-gradient(to bottom,rgba(150,205,232,0.1),#9fd0e8 35%,#9fd0e8 65%,rgba(150,205,232,0.1))"></div>
<div class="abs" style="left:888px;top:122px;width:1px;height:38px;background:linear-gradient(to bottom,rgba(150,205,232,0.1),#9fd0e8 35%,#9fd0e8 65%,rgba(150,205,232,0.1))"></div>
<div class="abs" style="left:966px;top:122px;width:1px;height:38px;background:linear-gradient(to bottom,rgba(150,205,232,0.1),#9fd0e8 35%,#9fd0e8 65%,rgba(150,205,232,0.1))"></div>
<div class="abs" style="left:407.3px;top:161px;width:847px;height:545px;overflow:hidden;background:#dbe7f6">
<div class="abs" style="left:0;top:39px;width:847px;height:1px;background:#c5d9ed"></div>
<div style="position:absolute;left:10.699999999999989px;top:12.0px;width:14px;height:14px;border-radius:2px;background:#5db771"><svg style="position:absolute;left:0;top:0" width="14" height="14" viewBox="0 0 14 14"><path d="M2.6 7.2L5.6 10.2L11.4 3.8" fill="none" stroke="#fff" stroke-width="2.2"/></svg></div>
<svg style="position:absolute;left:42.5px;top:7.5px" width="20" height="23" viewBox="0 0 20 23"><path d="M0 0.4H13.6L17.2 4V22.4H0Z" fill="#1d4f7c"/><path d="M13.6 0.4L17.2 4H13.6Z" fill="#f6c12f"/><rect x="1.4" y="1.6" width="1.5" height="1.7" fill="#fff"/><rect x="14.2" y="1.6" width="1.5" height="1.7" fill="#fff"/><rect x="1.4" y="4.9" width="1.5" height="1.7" fill="#fff"/><rect x="14.2" y="4.9" width="1.5" height="1.7" fill="#fff"/><rect x="1.4" y="8.2" width="1.5" height="1.7" fill="#fff"/><rect x="14.2" y="8.2" width="1.5" height="1.7" fill="#fff"/><rect x="1.4" y="11.499999999999998" width="1.5" height="1.7" fill="#fff"/><rect x="14.2" y="11.499999999999998" width="1.5" height="1.7" fill="#fff"/><rect x="1.4" y="14.799999999999999" width="1.5" height="1.7" fill="#fff"/><rect x="14.2" y="14.799999999999999" width="1.5" height="1.7" fill="#fff"/><rect x="1.4" y="18.1" width="1.5" height="1.7" fill="#fff"/><rect x="14.2" y="18.1" width="1.5" height="1.7" fill="#fff"/><circle cx="8.6" cy="7.6" r="4.2" fill="#fff"/><path d="M7.2 5.2L11.2 7.6L7.2 10Z" fill="#1d4f7c"/><rect x="5.4" y="13.2" width="14.2" height="7.2" rx="1" fill="#f6c12f"/><text x="12.5" y="19.2" font-family='"Liberation Sans", sans-serif' font-size="6" font-weight="bold" fill="#1d4f7c" text-anchor="middle">MP4</text></svg>
<div style="position:absolute;left:70.30px;top:9.12px;height:20px;line-height:20px;font-size:11.5px;color:#0a0e26;font-weight:normal;white-space:nowrap;transform:scaleX(0.9503);transform-origin:0 50%;-webkit-text-stroke:0.15px #0a0e26;">0408 (2).mp4</div>
<div style="position:absolute;left:303.90px;top:9.12px;height:20px;line-height:20px;font-size:11.5px;color:#0a0e26;font-weight:normal;white-space:nowrap;-webkit-text-stroke:0.15px #0a0e26;">2025/06/10 : 11:40:54</div>
<div style="position:absolute;left:430.90px;top:9.12px;height:20px;line-height:20px;font-size:11.5px;color:#0a0e26;font-weight:normal;white-space:nowrap;transform:scaleX(0.8782);transform-origin:0 50%;-webkit-text-stroke:0.15px #0a0e26;">MP4 Do<span style="letter-spacing:1.1px">...</span></div>
<div style="position:absolute;left:490.50px;top:9.12px;height:20px;line-height:20px;font-size:11.5px;color:#0a0e26;font-weight:normal;white-space:nowrap;transform:scaleX(0.8979);transform-origin:0 50%;-webkit-text-stroke:0.15px #0a0e26;">30,82 MB</div>
<div class="abs" style="left:0;top:79px;width:847px;height:1px;background:#c5d9ed"></div>
<div style="position:absolute;left:10.699999999999989px;top:52.0px;width:14px;height:14px;border-radius:2px;background:#5db771"><svg style="position:absolute;left:0;top:0" width="14" height="14" viewBox="0 0 14 14"><path d="M2.6 7.2L5.6 10.2L11.4 3.8" fill="none" stroke="#fff" stroke-width="2.2"/></svg></div>
<svg style="position:absolute;left:42.30000000000001px;top:47.2px" width="19" height="23" viewBox="0 0 19 23"><path d="M0.6 0.6H13.4L18.4 5.6V16H0.6Z" fill="#f5f1e6"/><path d="M13.4 0.6L18.4 5.6H13.4Z" fill="#ddd8c8"/><circle cx="5" cy="5.4" r="1.9" fill="#f8c630"/><path d="M0.6 14.4L6.6 8.4L9.8 11.4L13.6 7.4L18.4 12.2V16H0.6Z" fill="#6dae50"/><rect x="0.6" y="15.4" width="17.8" height="7" rx="1" fill="#5fa143"/><text x="9.5" y="21.4" font-family='"Liberation Sans", sans-serif' font-size="6.6" font-weight="bold" fill="#fff" text-anchor="middle">PNG</text></svg>
<div style="position:absolute;left:70.30px;top:49.12px;height:20px;line-height:20px;font-size:11.5px;color:#0a0e26;font-weight:normal;white-space:nowrap;transform:scaleX(0.9536);transform-origin:0 50%;-webkit-text-stroke:0.15px #0a0e26;">260f1ba7-259e-4ae5-a5d2-4f6e7c8d.png</div>
<div style="position:absolute;left:303.90px;top:49.12px;height:20px;line-height:20px;font-size:11.5px;color:#0a0e26;font-weight:normal;white-space:nowrap;-webkit-text-stroke:0.15px #0a0e26;">2025/06/10 : 11:41:46</div>
<div style="position:absolute;left:430.90px;top:49.12px;height:20px;line-height:20px;font-size:11.5px;color:#0a0e26;font-weight:normal;white-space:nowrap;transform:scaleX(0.8581);transform-origin:0 50%;-webkit-text-stroke:0.15px #0a0e26;">PNG Do<span style="letter-spacing:1.1px">...</span></div>
<div style="position:absolute;left:490.50px;top:49.12px;height:20px;line-height:20px;font-size:11.5px;color:#0a0e26;font-weight:normal;white-space:nowrap;transform:scaleX(0.8919);transform-origin:0 50%;-webkit-text-stroke:0.15px #0a0e26;">1,97 MB</div>
<div class="abs" style="left:0;top:119px;width:847px;height:1px;background:#c5d9ed"></div>
<div style="position:absolute;left:10.699999999999989px;top:92.0px;width:14px;height:14px;border-radius:2px;background:#5db771"><svg style="position:absolute;left:0;top:0" width="14" height="14" viewBox="0 0 14 14"><path d="M2.6 7.2L5.6 10.2L11.4 3.8" fill="none" stroke="#fff" stroke-width="2.2"/></svg></div>
<svg style="position:absolute;left:42.099999999999966px;top:87.1px" width="20" height="23" viewBox="0 0 20 23"><path d="M0.6 0.6H13.4L19.4 6.6V22.4H0.6Z" fill="#efe9ee"/><path d="M13.4 0.6L19.4 6.6H13.4Z" fill="#3f9a6c"/><circle cx="9.4" cy="10" r="3.9" fill="none" stroke="#4a9c78" stroke-width="1"/><path d="M8.2 7.9L11.8 10L8.2 12.1Z" fill="#4a9c78"/><rect x="0.6" y="16.6" width="18.8" height="5.8" fill="#5aa482"/><text x="10" y="21.8" font-family='"Liberation Sans", sans-serif' font-size="6.2" font-weight="bold" fill="#e8f4ee" text-anchor="middle">GIF</text></svg>
<div style="position:absolute;left:70.30px;top:89.12px;height:20px;line-height:20px;font-size:11.5px;color:#0a0e26;font-weight:normal;white-space:nowrap;transform:scaleX(0.9294);transform-origin:0 50%;-webkit-text-stroke:0.15px #0a0e26;">Angel Wings GIF by Angels Skates.gif</div>
<div style="position:absolute;left:303.90px;top:89.12px;height:20px;line-height:20px;font-size:11.5px;color:#0a0e26;font-weight:normal;white-space:nowrap;-webkit-text-stroke:0.15px #0a0e26;">2025/06/10 : 11:41:18</div>
<div style="position:absolute;left:430.90px;top:89.12px;height:20px;line-height:20px;font-size:11.5px;color:#0a0e26;font-weight:normal;white-space:nowrap;transform:scaleX(0.8970);transform-origin:0 50%;-webkit-text-stroke:0.15px #0a0e26;">GIF Do<span style="letter-spacing:1.1px">...</span></div>
<div style="position:absolute;left:490.50px;top:89.12px;height:20px;line-height:20px;font-size:11.5px;color:#0a0e26;font-weight:normal;white-space:nowrap;transform:scaleX(0.8919);transform-origin:0 50%;-webkit-text-stroke:0.15px #0a0e26;">37,24 KB</div>
<div class="abs" style="left:0;top:159px;width:847px;height:1px;background:#c5d9ed"></div>
<div style="position:absolute;left:10.699999999999989px;top:132.0px;width:14px;height:14px;border-radius:2px;background:#5db771"><svg style="position:absolute;left:0;top:0" width="14" height="14" viewBox="0 0 14 14"><path d="M2.6 7.2L5.6 10.2L11.4 3.8" fill="none" stroke="#fff" stroke-width="2.2"/></svg></div>
<svg style="position:absolute;left:40.30000000000001px;top:128.7px" width="23" height="21" viewBox="0 0 23 21"><path d="M6 1.2Q6 0.2 7 0.2H21.6Q22.6 0.2 22.6 1.2V5.4H6Z" fill="#41a5ee"/><rect x="6" y="5.4" width="16.6" height="5.2" fill="#2b7cd3"/><rect x="6" y="10.6" width="16.6" height="5.2" fill="#185abd"/><path d="M6 15.8H22.6V19.8Q22.6 20.8 21.6 20.8H7Q6 20.8 6 19.8Z" fill="#103f91"/><rect x="0.2" y="4.9" width="11.2" height="11.2" rx="1" fill="#2359bf"/><text x="5.8" y="13.9" font-family='"Liberation Sans", sans-serif' font-size="9.2" font-weight="bold" fill="#fff" text-anchor="middle">W</text></svg>
<div style="position:absolute;left:70.30px;top:129.12px;height:20px;line-height:20px;font-size:11.5px;color:#0a0e26;font-weight:normal;white-space:nowrap;transform:scaleX(0.8528);transform-origin:0 50%;-webkit-text-stroke:0.15px #0a0e26;">ENDBENUTZER.docx</div>
<div style="position:absolute;left:303.90px;top:129.12px;height:20px;line-height:20px;font-size:11.5px;color:#0a0e26;font-weight:normal;white-space:nowrap;-webkit-text-stroke:0.15px #0a0e26;">2025/06/10 : 11:41:32</div>
<div style="position:absolute;left:430.90px;top:129.12px;height:20px;line-height:20px;font-size:11.5px;color:#0a0e26;font-weight:normal;white-space:nowrap;transform:scaleX(0.8681);transform-origin:0 50%;-webkit-text-stroke:0.15px #0a0e26;">DOCX <span style="letter-spacing:1.1px">...</span></div>
<div style="position:absolute;left:490.50px;top:129.12px;height:20px;line-height:20px;font-size:11.5px;color:#0a0e26;font-weight:normal;white-space:nowrap;transform:scaleX(0.8919);transform-origin:0 50%;-webkit-text-stroke:0.15px #0a0e26;">20,43 KB</div>
<div class="abs" style="left:0;top:199px;width:847px;height:1px;background:#c5d9ed"></div>
<div style="position:absolute;left:10.699999999999989px;top:172.0px;width:14px;height:14px;border-radius:2px;background:#5db771"><svg style="position:absolute;left:0;top:0" width="14" height="14" viewBox="0 0 14 14"><path d="M2.6 7.2L5.6 10.2L11.4 3.8" fill="none" stroke="#fff" stroke-width="2.2"/></svg></div>
<svg style="position:absolute;left:40.69999999999999px;top:168.9px" width="22" height="19.6" viewBox="0 0 22 19"><defs><linearGradient id="fg" x1="0" y1="0" x2="0.25" y2="1"><stop offset="0" stop-color="#ffd96f"/><stop offset="1" stop-color="#ffb83a"/></linearGradient></defs><path d="M0 2.2Q0 0.6 1.6 0.6H6.6Q7.6 0.6 8.3 1.4L9.6 2.8H20.4Q22 2.8 22 4.4V12H0Z" fill="#f8a31d"/><rect x="2.6" y="4.2" width="16.8" height="3" fill="#fffdf5"/><path d="M0 6.2H22V17.4Q22 19 20.4 19H1.6Q0 19 0 17.4Z" fill="url(#fg)"/></svg>
<div style="position:absolute;left:70.30px;top:169.12px;height:20px;line-height:20px;font-size:11.5px;color:#0a0e26;font-weight:normal;white-space:nowrap;transform:scaleX(0.9937);transform-origin:0 50%;-webkit-text-stroke:0.15px #0a0e26;">exfat-recovery</div>
<div style="position:absolute;left:303.90px;top:169.12px;height:20px;line-height:20px;font-size:11.5px;color:#0a0e26;font-weight:normal;white-space:nowrap;-webkit-text-stroke:0.15px #0a0e26;">2025/06/10 : 11:42:42</div>
<div style="position:absolute;left:430.90px;top:169.12px;height:20px;line-height:20px;font-size:11.5px;color:#0a0e26;font-weight:normal;white-space:nowrap;transform:scaleX(0.9386);transform-origin:0 50%;-webkit-text-stroke:0.15px #0a0e26;">Carpeta</div>
<div style="position:absolute;left:490.50px;top:169.12px;height:20px;line-height:20px;font-size:11.5px;color:#0a0e26;font-weight:normal;white-space:nowrap;transform:scaleX(0.9324);transform-origin:0 50%;-webkit-text-stroke:0.15px #0a0e26;">0 Byte</div>
<div class="abs" style="left:0;top:239px;width:847px;height:1px;background:#c5d9ed"></div>
<div style="position:absolute;left:10.699999999999989px;top:212.0px;width:14px;height:14px;border-radius:2px;background:#5db771"><svg style="position:absolute;left:0;top:0" width="14" height="14" viewBox="0 0 14 14"><path d="M2.6 7.2L5.6 10.2L11.4 3.8" fill="none" stroke="#fff" stroke-width="2.2"/></svg></div>
<svg style="position:absolute;left:40.69999999999999px;top:208.9px" width="22" height="19.6" viewBox="0 0 22 19"><defs><linearGradient id="fg" x1="0" y1="0" x2="0.25" y2="1"><stop offset="0" stop-color="#ffd96f"/><stop offset="1" stop-color="#ffb83a"/></linearGradient></defs><path d="M0 2.2Q0 0.6 1.6 0.6H6.6Q7.6 0.6 8.3 1.4L9.6 2.8H20.4Q22 2.8 22 4.4V12H0Z" fill="#f8a31d"/><rect x="2.6" y="4.2" width="16.8" height="3" fill="#fffdf5"/><path d="M0 6.2H22V17.4Q22 19 20.4 19H1.6Q0 19 0 17.4Z" fill="url(#fg)"/></svg>
<div style="position:absolute;left:70.30px;top:209.12px;height:20px;line-height:20px;font-size:11.5px;color:#0a0e26;font-weight:normal;white-space:nowrap;transform:scaleX(0.9850);transform-origin:0 50%;-webkit-text-stroke:0.15px #0a0e26;">fat32-recovery</div>
<div style="position:absolute;left:303.90px;top:209.12px;height:20px;line-height:20px;font-size:11.5px;color:#0a0e26;font-weight:normal;white-space:nowrap;-webkit-text-stroke:0.15px #0a0e26;">2025/06/10 : 11:42:42</div>
<div style="position:absolute;left:430.90px;top:209.12px;height:20px;line-height:20px;font-size:11.5px;color:#0a0e26;font-weight:normal;white-space:nowrap;transform:scaleX(0.9386);transform-origin:0 50%;-webkit-text-stroke:0.15px #0a0e26;">Carpeta</div>
<div style="position:absolute;left:490.50px;top:209.12px;height:20px;line-height:20px;font-size:11.5px;color:#0a0e26;font-weight:normal;white-space:nowrap;transform:scaleX(0.9324);transform-origin:0 50%;-webkit-text-stroke:0.15px #0a0e26;">0 Byte</div>
<div class="abs" style="left:0;top:279px;width:847px;height:1px;background:#c5d9ed"></div>
<div style="position:absolute;left:10.699999999999989px;top:252.0px;width:14px;height:14px;border-radius:2px;background:#5db771"><svg style="position:absolute;left:0;top:0" width="14" height="14" viewBox="0 0 14 14"><path d="M2.6 7.2L5.6 10.2L11.4 3.8" fill="none" stroke="#fff" stroke-width="2.2"/></svg></div>
<svg style="position:absolute;left:40.69999999999999px;top:248.9px" width="22" height="19.6" viewBox="0 0 22 19"><defs><linearGradient id="fg" x1="0" y1="0" x2="0.25" y2="1"><stop offset="0" stop-color="#ffd96f"/><stop offset="1" stop-color="#ffb83a"/></linearGradient></defs><path d="M0 2.2Q0 0.6 1.6 0.6H6.6Q7.6 0.6 8.3 1.4L9.6 2.8H20.4Q22 2.8 22 4.4V12H0Z" fill="#f8a31d"/><rect x="2.6" y="4.2" width="16.8" height="3" fill="#fffdf5"/><path d="M0 6.2H22V17.4Q22 19 20.4 19H1.6Q0 19 0 17.4Z" fill="url(#fg)"/></svg>
<div style="position:absolute;left:70.30px;top:249.12px;height:20px;line-height:20px;font-size:11.5px;color:#0a0e26;font-weight:normal;white-space:nowrap;transform:scaleX(0.9644);transform-origin:0 50%;-webkit-text-stroke:0.15px #0a0e26;">file-recovery</div>
<div style="position:absolute;left:303.90px;top:249.12px;height:20px;line-height:20px;font-size:11.5px;color:#0a0e26;font-weight:normal;white-space:nowrap;-webkit-text-stroke:0.15px #0a0e26;">2025/06/10 : 11:42:42</div>
<div style="position:absolute;left:430.90px;top:249.12px;height:20px;line-height:20px;font-size:11.5px;color:#0a0e26;font-weight:normal;white-space:nowrap;transform:scaleX(0.9386);transform-origin:0 50%;-webkit-text-stroke:0.15px #0a0e26;">Carpeta</div>
<div style="position:absolute;left:490.50px;top:249.12px;height:20px;line-height:20px;font-size:11.5px;color:#0a0e26;font-weight:normal;white-space:nowrap;transform:scaleX(0.9324);transform-origin:0 50%;-webkit-text-stroke:0.15px #0a0e26;">0 Byte</div>
<div class="abs" style="left:0;top:319px;width:847px;height:1px;background:#c5d9ed"></div>
<div style="position:absolute;left:10.699999999999989px;top:292.0px;width:14px;height:14px;border-radius:2px;background:#5db771"><svg style="position:absolute;left:0;top:0" width="14" height="14" viewBox="0 0 14 14"><path d="M2.6 7.2L5.6 10.2L11.4 3.8" fill="none" stroke="#fff" stroke-width="2.2"/></svg></div>
<svg style="position:absolute;left:40.69999999999999px;top:288.9px" width="22" height="19.6" viewBox="0 0 22 19"><defs><linearGradient id="fg" x1="0" y1="0" x2="0.25" y2="1"><stop offset="0" stop-color="#ffd96f"/><stop offset="1" stop-color="#ffb83a"/></linearGradient></defs><path d="M0 2.2Q0 0.6 1.6 0.6H6.6Q7.6 0.6 8.3 1.4L9.6 2.8H20.4Q22 2.8 22 4.4V12H0Z" fill="#f8a31d"/><rect x="2.6" y="4.2" width="16.8" height="3" fill="#fffdf5"/><path d="M0 6.2H22V17.4Q22 19 20.4 19H1.6Q0 19 0 17.4Z" fill="url(#fg)"/></svg>
<div style="position:absolute;left:70.30px;top:289.12px;height:20px;line-height:20px;font-size:11.5px;color:#0a0e26;font-weight:normal;white-space:nowrap;transform:scaleX(0.9646);transform-origin:0 50%;-webkit-text-stroke:0.15px #0a0e26;">flash-drive-recovery</div>
<div style="position:absolute;left:303.90px;top:289.12px;height:20px;line-height:20px;font-size:11.5px;color:#0a0e26;font-weight:normal;white-space:nowrap;-webkit-text-stroke:0.15px #0a0e26;">2025/06/10 : 11:42:36</div>
<div style="position:absolute;left:430.90px;top:289.12px;height:20px;line-height:20px;font-size:11.5px;color:#0a0e26;font-weight:normal;white-space:nowrap;transform:scaleX(0.9386);transform-origin:0 50%;-webkit-text-stroke:0.15px #0a0e26;">Carpeta</div>
<div style="position:absolute;left:490.50px;top:289.12px;height:20px;line-height:20px;font-size:11.5px;color:#0a0e26;font-weight:normal;white-space:nowrap;transform:scaleX(0.9324);transform-origin:0 50%;-webkit-text-stroke:0.15px #0a0e26;">0 Byte</div>
<div class="abs" style="left:0;top:359px;width:847px;height:1px;background:#c5d9ed"></div>
<div style="position:absolute;left:10.699999999999989px;top:332.0px;width:14px;height:14px;border-radius:2px;background:#5db771"><svg style="position:absolute;left:0;top:0" width="14" height="14" viewBox="0 0 14 14"><path d="M2.6 7.2L5.6 10.2L11.4 3.8" fill="none" stroke="#fff" stroke-width="2.2"/></svg></div>
<svg style="position:absolute;left:40.69999999999999px;top:328.9px" width="22" height="19.6" viewBox="0 0 22 19"><defs><linearGradient id="fg" x1="0" y1="0" x2="0.25" y2="1"><stop offset="0" stop-color="#ffd96f"/><stop offset="1" stop-color="#ffb83a"/></linearGradient></defs><path d="M0 2.2Q0 0.6 1.6 0.6H6.6Q7.6 0.6 8.3 1.4L9.6 2.8H20.4Q22 2.8 22 4.4V12H0Z" fill="#f8a31d"/><rect x="2.6" y="4.2" width="16.8" height="3" fill="#fffdf5"/><path d="M0 6.2H22V17.4Q22 19 20.4 19H1.6Q0 19 0 17.4Z" fill="url(#fg)"/></svg>
<div style="position:absolute;left:70.30px;top:329.12px;height:20px;line-height:20px;font-size:11.5px;color:#0a0e26;font-weight:normal;white-space:nowrap;transform:scaleX(0.9669);transform-origin:0 50%;-webkit-text-stroke:0.15px #0a0e26;">hard-drive-recovery</div>
<div style="position:absolute;left:303.90px;top:329.12px;height:20px;line-height:20px;font-size:11.5px;color:#0a0e26;font-weight:normal;white-space:nowrap;-webkit-text-stroke:0.15px #0a0e26;">2025/06/10 : 11:42:36</div>
<div style="position:absolute;left:430.90px;top:329.12px;height:20px;line-height:20px;font-size:11.5px;color:#0a0e26;font-weight:normal;white-space:nowrap;transform:scaleX(0.9386);transform-origin:0 50%;-webkit-text-stroke:0.15px #0a0e26;">Carpeta</div>
<div style="position:absolute;left:490.50px;top:329.12px;height:20px;line-height:20px;font-size:11.5px;color:#0a0e26;font-weight:normal;white-space:nowrap;transform:scaleX(0.9324);transform-origin:0 50%;-webkit-text-stroke:0.15px #0a0e26;">0 Byte</div>
<div class="abs" style="left:0;top:399px;width:847px;height:1px;background:#c5d9ed"></div>
<div style="position:absolute;left:10.699999999999989px;top:372.0px;width:14px;height:14px;border-radius:2px;background:#5db771"><svg style="position:absolute;left:0;top:0" width="14" height="14" viewBox="0 0 14 14"><path d="M2.6 7.2L5.6 10.2L11.4 3.8" fill="none" stroke="#fff" stroke-width="2.2"/></svg></div>
<svg style="position:absolute;left:40.69999999999999px;top:368.9px" width="22" height="19.6" viewBox="0 0 22 19"><defs><linearGradient id="fg" x1="0" y1="0" x2="0.25" y2="1"><stop offset="0" stop-color="#ffd96f"/><stop offset="1" stop-color="#ffb83a"/></linearGradient></defs><path d="M0 2.2Q0 0.6 1.6 0.6H6.6Q7.6 0.6 8.3 1.4L9.6 2.8H20.4Q22 2.8 22 4.4V12H0Z" fill="#f8a31d"/><rect x="2.6" y="4.2" width="16.8" height="3" fill="#fffdf5"/><path d="M0 6.2H22V17.4Q22 19 20.4 19H1.6Q0 19 0 17.4Z" fill="url(#fg)"/></svg>
<div style="position:absolute;left:70.30px;top:369.12px;height:20px;line-height:20px;font-size:11.5px;color:#0a0e26;font-weight:normal;white-space:nowrap;transform:scaleX(0.8813);transform-origin:0 50%;-webkit-text-stroke:0.15px #0a0e26;">imgs</div>
<div style="position:absolute;left:303.90px;top:369.12px;height:20px;line-height:20px;font-size:11.5px;color:#0a0e26;font-weight:normal;white-space:nowrap;-webkit-text-stroke:0.15px #0a0e26;">2025/06/11 : 15:53:46</div>
<div style="position:absolute;left:430.90px;top:369.12px;height:20px;line-height:20px;font-size:11.5px;color:#0a0e26;font-weight:normal;white-space:nowrap;transform:scaleX(0.9386);transform-origin:0 50%;-webkit-text-stroke:0.15px #0a0e26;">Carpeta</div>
<div style="position:absolute;left:490.50px;top:369.12px;height:20px;line-height:20px;font-size:11.5px;color:#0a0e26;font-weight:normal;white-space:nowrap;transform:scaleX(0.9324);transform-origin:0 50%;-webkit-text-stroke:0.15px #0a0e26;">0 Byte</div>
<div class="abs" style="left:0;top:439px;width:847px;height:1px;background:#c5d9ed"></div>
<div style="position:absolute;left:10.699999999999989px;top:412.0px;width:14px;height:14px;border-radius:2px;background:#5db771"><svg style="position:absolute;left:0;top:0" width="14" height="14" viewBox="0 0 14 14"><path d="M2.6 7.2L5.6 10.2L11.4 3.8" fill="none" stroke="#fff" stroke-width="2.2"/></svg></div>
<svg style="position:absolute;left:40.69999999999999px;top:408.9px" width="22" height="19.6" viewBox="0 0 22 19"><defs><linearGradient id="fg" x1="0" y1="0" x2="0.25" y2="1"><stop offset="0" stop-color="#ffd96f"/><stop offset="1" stop-color="#ffb83a"/></linearGradient></defs><path d="M0 2.2Q0 0.6 1.6 0.6H6.6Q7.6 0.6 8.3 1.4L9.6 2.8H20.4Q22 2.8 22 4.4V12H0Z" fill="#f8a31d"/><rect x="2.6" y="4.2" width="16.8" height="3" fill="#fffdf5"/><path d="M0 6.2H22V17.4Q22 19 20.4 19H1.6Q0 19 0 17.4Z" fill="url(#fg)"/></svg>
<div style="position:absolute;left:70.30px;top:409.12px;height:20px;line-height:20px;font-size:11.5px;color:#0a0e26;font-weight:normal;white-space:nowrap;transform:scaleX(0.8813);transform-origin:0 50%;-webkit-text-stroke:0.15px #0a0e26;">imgs</div>
<div style="position:absolute;left:303.90px;top:409.12px;height:20px;line-height:20px;font-size:11.5px;color:#0a0e26;font-weight:normal;white-space:nowrap;-webkit-text-stroke:0.15px #0a0e26;">2025/06/10 : 11:42:36</div>
<div style="position:absolute;left:430.90px;top:409.12px;height:20px;line-height:20px;font-size:11.5px;color:#0a0e26;font-weight:normal;white-space:nowrap;transform:scaleX(0.9386);transform-origin:0 50%;-webkit-text-stroke:0.15px #0a0e26;">Carpeta</div>
<div style="position:absolute;left:490.50px;top:409.12px;height:20px;line-height:20px;font-size:11.5px;color:#0a0e26;font-weight:normal;white-space:nowrap;transform:scaleX(0.9324);transform-origin:0 50%;-webkit-text-stroke:0.15px #0a0e26;">0 Byte</div>
<div class="abs" style="left:0;top:479px;width:847px;height:1px;background:#c5d9ed"></div>
<div style="position:absolute;left:10.699999999999989px;top:452.0px;width:14px;height:14px;border-radius:2px;background:#5db771"><svg style="position:absolute;left:0;top:0" width="14" height="14" viewBox="0 0 14 14"><path d="M2.6 7.2L5.6 10.2L11.4 3.8" fill="none" stroke="#fff" stroke-width="2.2"/></svg></div>
<svg style="position:absolute;left:42.69999999999999px;top:447.7px" width="18" height="22" viewBox="0 0 18 22"><defs><linearGradient id="lg" x1="0" y1="0" x2="0" y2="1"><stop offset="0" stop-color="#f7f7f7"/><stop offset="1" stop-color="#e9e9e9"/></linearGradient></defs><path d="M0.6 0.4H11.4L17.4 6.4V21.4H0.6Z" fill="url(#lg)"/><path d="M11.4 0.4L17.4 6.4H11.4Z" fill="#3ab0e6"/></svg>
<div style="position:absolute;left:70.30px;top:449.12px;height:20px;line-height:20px;font-size:11.5px;color:#0a0e26;font-weight:normal;white-space:nowrap;transform:scaleX(0.9303);transform-origin:0 50%;-webkit-text-stroke:0.15px #0a0e26;">Microsoft Edge.lnk</div>
<div style="position:absolute;left:303.90px;top:449.12px;height:20px;line-height:20px;font-size:11.5px;color:#0a0e26;font-weight:normal;white-space:nowrap;-webkit-text-stroke:0.15px #0a0e26;">2025/06/11 : 15:53:46</div>
<div style="position:absolute;left:430.90px;top:449.12px;height:20px;line-height:20px;font-size:11.5px;color:#0a0e26;font-weight:normal;white-space:nowrap;transform:scaleX(0.8617);transform-origin:0 50%;-webkit-text-stroke:0.15px #0a0e26;">LNK Do<span style="letter-spacing:1.1px">...</span></div>
<div style="position:absolute;left:490.50px;top:449.12px;height:20px;line-height:20px;font-size:11.5px;color:#0a0e26;font-weight:normal;white-space:nowrap;transform:scaleX(0.8847);transform-origin:0 50%;-webkit-text-stroke:0.15px #0a0e26;">2,21 KB</div>
<div class="abs" style="left:0;top:519px;width:847px;height:1px;background:#c5d9ed"></div>
<div style="position:absolute;left:10.699999999999989px;top:492.0px;width:14px;height:14px;border-radius:2px;background:#5db771"><svg style="position:absolute;left:0;top:0" width="14" height="14" viewBox="0 0 14 14"><path d="M2.6 7.2L5.6 10.2L11.4 3.8" fill="none" stroke="#fff" stroke-width="2.2"/></svg></div>
<svg style="position:absolute;left:40.30000000000001px;top:488.7px" width="23" height="21" viewBox="0 0 23 21"><path d="M6 1.2Q6 0.2 7 0.2H21.6Q22.6 0.2 22.6 1.2V5.4H6Z" fill="#41a5ee"/><rect x="6" y="5.4" width="16.6" height="5.2" fill="#2b7cd3"/><rect x="6" y="10.6" width="16.6" height="5.2" fill="#185abd"/><path d="M6 15.8H22.6V19.8Q22.6 20.8 21.6 20.8H7Q6 20.8 6 19.8Z" fill="#103f91"/><rect x="0.2" y="4.9" width="11.2" height="11.2" rx="1" fill="#2359bf"/><text x="5.8" y="13.9" font-family='"Liberation Sans", sans-serif' font-size="9.2" font-weight="bold" fill="#fff" text-anchor="middle">W</text></svg>
<div style="position:absolute;left:70.30px;top:489.12px;height:20px;line-height:20px;font-size:11.5px;color:#0a0e26;font-weight:normal;white-space:nowrap;transform:scaleX(0.9461);transform-origin:0 50%;-webkit-text-stroke:0.15px #0a0e26;">Microsoft Word Document (neu).docx</div>
<div style="position:absolute;left:303.90px;top:489.12px;height:20px;line-height:20px;font-size:11.5px;color:#0a0e26;font-weight:normal;white-space:nowrap;-webkit-text-stroke:0.15px #0a0e26;">2025/06/11 : 15:53:46</div>
<div style="position:absolute;left:430.90px;top:489.12px;height:20px;line-height:20px;font-size:11.5px;color:#0a0e26;font-weight:normal;white-space:nowrap;transform:scaleX(0.8681);transform-origin:0 50%;-webkit-text-stroke:0.15px #0a0e26;">DOCX <span style="letter-spacing:1.1px">...</span></div>
<div style="position:absolute;left:490.50px;top:489.12px;height:20px;line-height:20px;font-size:11.5px;color:#0a0e26;font-weight:normal;white-space:nowrap;transform:scaleX(0.8919);transform-origin:0 50%;-webkit-text-stroke:0.15px #0a0e26;">49,21 KB</div>
<div class="abs" style="left:0;top:559px;width:847px;height:1px;background:#c5d9ed"></div>
<div style="position:absolute;left:10.699999999999989px;top:532.0px;width:14px;height:14px;border-radius:2px;background:#5db771"><svg style="position:absolute;left:0;top:0" width="14" height="14" viewBox="0 0 14 14"><path d="M2.6 7.2L5.6 10.2L11.4 3.8" fill="none" stroke="#fff" stroke-width="2.2"/></svg></div>
<svg style="position:absolute;left:42.30000000000001px;top:527.7px" width="18" height="22" viewBox="0 0 18 22"><path d="M0.6 0.4H12.4L17.4 5.4V21.4H0.6Z" fill="#efebe0"/><path d="M12.4 0.4L17.4 5.4H12.4Z" fill="#d9d4c6"/><path d="M3 5.4H6.4M3 8.4H9.4M11 8.4H14.6M3 11.4H14.6M3 14.4H5M6.6 14.4H11M12.4 14.4H14.6M3 17.4H6.4" stroke="#b9b4a6" stroke-width="1.2"/></svg>
<div style="position:absolute;left:70.30px;top:529.12px;height:20px;line-height:20px;font-size:11.5px;color:#0a0e26;font-weight:normal;white-space:nowrap;transform:scaleX(1.0049);transform-origin:0 50%;-webkit-text-stroke:0.15px #0a0e26;">partner-list.txt</div>
<div style="position:absolute;left:303.90px;top:529.12px;height:20px;line-height:20px;font-size:11.5px;color:#0a0e26;font-weight:normal;white-space:nowrap;-webkit-text-stroke:0.15px #0a0e26;">2025/06/10 : 11:41:32</div>
<div style="position:absolute;left:430.90px;top:529.12px;height:20px;line-height:20px;font-size:11.5px;color:#0a0e26;font-weight:normal;white-space:nowrap;transform:scaleX(0.8758);transform-origin:0 50%;-webkit-text-stroke:0.15px #0a0e26;">TXT Do<span style="letter-spacing:1.1px">...</span></div>
<div style="position:absolute;left:490.50px;top:529.12px;height:20px;line-height:20px;font-size:11.5px;color:#0a0e26;font-weight:normal;white-space:nowrap;transform:scaleX(0.8847);transform-origin:0 50%;-webkit-text-stroke:0.15px #0a0e26;">6,56 KB</div>
</div>
<div class="abs" style="left:1256px;top:163px;width:10px;height:167px;background:#888;border-radius:3px"></div>
<div class="abs" style="left:613px;top:177px;width:198px;height:84px;background:#0a0d10;border-radius:6px"></div>
<div class="abs" style="left:613px;top:184px;width:198px;height:69px;background:#20262c"></div>
<div class="abs" style="left:613px;top:218px;width:198px;height:1px;background:#0b0e11"></div>
<svg class="abs" style="left:630.4px;top:193.6px" width="19.6" height="14" viewBox="0 0 21 15"><path d="M1 7.5Q5.4 1.2 10.4 1.2Q15.4 1.2 19.8 7.5Q15.4 13.8 10.4 13.8Q5.4 13.8 1 7.5Z" fill="none" stroke="#fff" stroke-width="1.5"/><circle cx="10.4" cy="7.5" r="3" fill="#fff"/></svg>
<div style="position:absolute;left:663.70px;top:191.56px;height:20px;line-height:20px;font-size:16px;color:#f4f4f4;font-weight:normal;white-space:nowrap;transform:scaleX(0.9739);transform-origin:0 50%;">Ver contenido</div>
<svg style="position:absolute;left:632px;top:228px" width="16.5" height="16.5" viewBox="0 0 16 16"><path d="M1 8H14M8 1.6L14.4 8L8 14.4" fill="none" stroke="#fff" stroke-width="1.9" stroke-linecap="round" stroke-linejoin="round"/></svg>
<div style="position:absolute;left:687.00px;top:226.86px;height:20px;line-height:20px;font-size:16px;color:#f4f4f4;font-weight:normal;white-space:nowrap;transform:scaleX(0.9784);transform-origin:0 50%;">Recup.</div>
<div class="abs" style="left:10px;top:716.5px;width:1260px;height:78.3px;background:#20262c;border-radius:5px"></div>
<svg class="abs" style="left:40px;top:735px" width="40" height="40" viewBox="0 0 40 40"><path d="M26.6 3.6A17.2 17.2 0 1 0 37.2 18.4" fill="none" stroke="#12bd64" stroke-width="4" stroke-linecap="round"/><path d="M13.8 19.6L19.6 25.2L32.8 11.4" fill="none" stroke="#12bd64" stroke-width="4.2" stroke-linecap="round" stroke-linejoin="round"/></svg>
<div style="position:absolute;left:102.90px;top:728.56px;height:20px;line-height:20px;font-size:16px;color:#ffffff;font-weight:bold;white-space:nowrap;">Pausa de escaneo AI</div>
<div style="position:absolute;left:104.80px;top:758.56px;height:20px;line-height:20px;font-size:16px;color:#c2c8ce;font-weight:normal;white-space:nowrap;transform:scaleX(0.9774);transform-origin:0 50%;">Prog. escan:</div>
<div style="position:absolute;left:198.00px;top:758.56px;height:20px;line-height:20px;font-size:16px;color:#2fa9e8;font-weight:normal;white-space:nowrap;transform:scaleX(0.9709);transform-origin:0 50%;">10,56 %</div>
<svg class="abs" style="left:308px;top:761px" width="14" height="16" viewBox="0 0 14 16"><path d="M1.6 1.6L12.6 8L1.6 14.4Z" fill="#f4f4f4" stroke="#f4f4f4" stroke-width="1.4" stroke-linejoin="round"/></svg>
<div class="abs" style="left:335px;top:762.7px;width:12.3px;height:12.3px;background:#f4f4f4;border-radius:2.5px"></div>
<svg class="abs" style="left:376.6px;top:760px" width="14" height="16" viewBox="0 0 14 16"><path d="M0.4 0.2H9L13.4 4.6V15.8H0.4Z" fill="#4c8bf5"/><path d="M9 0.2L13.4 4.6H9Z" fill="#b3cffb"/><path d="M3 7H10.8M3 9.4H10.8M3 11.8H10.8M3 14H10.8" stroke="#e8f0fe" stroke-width="1.1"/></svg>
<div style="position:absolute;left:395.80px;top:758.56px;height:20px;line-height:20px;font-size:16px;color:#c2c8ce;font-weight:normal;white-space:nowrap;transform:scaleX(0.9834);transform-origin:0 50%;">Archivos encontrados: 13483</div>
<div style="position:absolute;left:601px;top:761.7px;width:14px;height:14px;border-radius:2px;background:#5db771"><svg style="position:absolute;left:0;top:0" width="14" height="14" viewBox="0 0 14 14"><path d="M2.6 7.2L5.6 10.2L11.4 3.8" fill="none" stroke="#fff" stroke-width="2.2"/></svg></div>
<div style="position:absolute;left:619.90px;top:758.56px;height:20px;line-height:20px;font-size:16px;color:#c2c8ce;font-weight:normal;white-space:nowrap;transform:scaleX(0.9883);transform-origin:0 50%;">Archivo seleccionado: 632</div>
<div class="abs" style="left:982px;top:735px;width:100.5px;height:42px;background:#f74e7b;border-radius:3px"></div>
<svg style="position:absolute;left:996.5px;top:748.5px" width="15.5" height="15.5" viewBox="0 0 16 16"><path d="M15 8H2M8 1.6L1.6 8L8 14.4" fill="none" stroke="#fff" stroke-width="2" stroke-linecap="round" stroke-linejoin="round"/></svg>
<div style="position:absolute;left:1015.40px;top:746.86px;height:20px;line-height:20px;font-size:16px;color:#ffffff;font-weight:normal;white-space:nowrap;transform:scaleX(0.9737);transform-origin:0 50%;">Volver</div>
<div class="abs" style="left:1092.8px;top:735px;width:150.4px;height:42px;background:#00aeff;border-radius:3px"></div>
<svg style="position:absolute;left:1113px;top:748.5px" width="15.5" height="15.5" viewBox="0 0 16 16"><path d="M1 8H14M8 1.6L14.4 8L8 14.4" fill="none" stroke="#fff" stroke-width="2" stroke-linecap="round" stroke-linejoin="round"/></svg>
<div style="position:absolute;left:1143.60px;top:746.86px;height:20px;line-height:20px;font-size:16px;color:#ffffff;font-weight:normal;white-space:nowrap;transform:scaleX(0.9626);transform-origin:0 50%;">Recup.</div>
</body></html>
